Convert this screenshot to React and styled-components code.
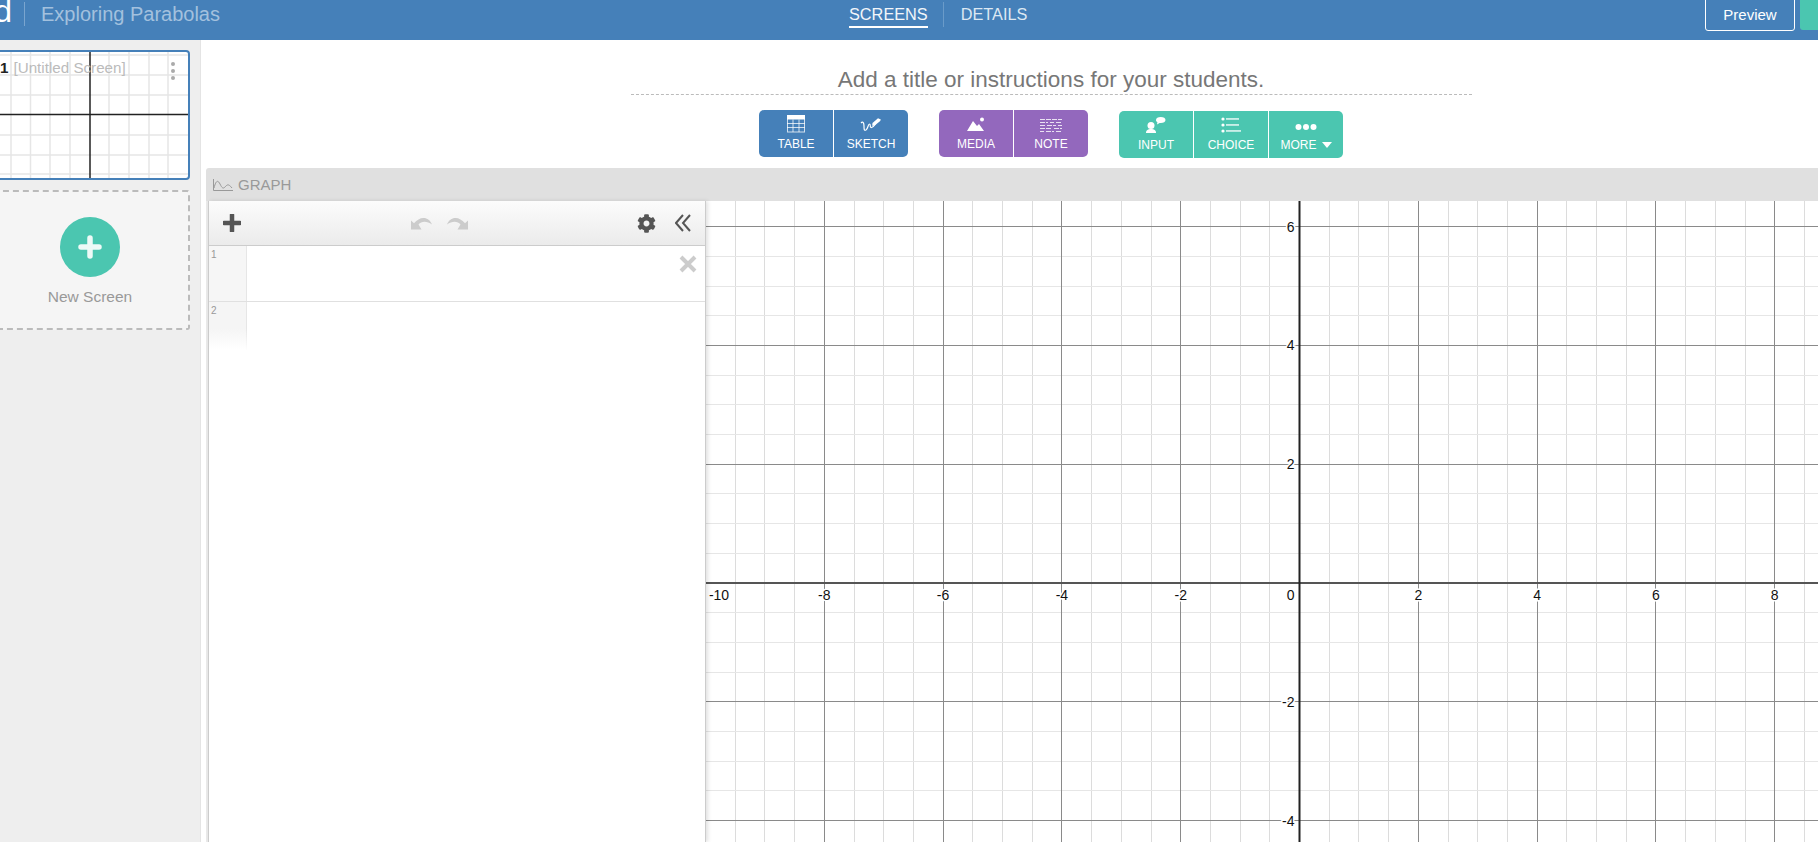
import React from "react"
import styled, { createGlobalStyle } from "styled-components"
import { FaCog } from "react-icons/fa"

const GlobalStyle = createGlobalStyle`
  html, body {
    margin: 0;
    height: 842px;
    overflow: hidden;
    background: #fff;
    font-family: "Liberation Sans", Arial, sans-serif;
  }
`

const Page = styled.div`
  width: 1818px;
  height: 842px;
  overflow: hidden;
  display: flex;
  flex-direction: column;
`

const Header = styled.header`
  height: 40px;
  flex: none;
  background: #4580b9;
  display: flex;
  align-items: flex-start;
  color: #fff;
`

const Brand = styled.div`
  width: 849px;
  flex: none;
  display: flex;
  align-items: flex-start;
`

const Logo = styled.div`
  width: 12px;
  height: 26px;
  overflow: hidden;
  display: flex;
  justify-content: flex-end;
  font-size: 32px;
  line-height: 22px;
`

const BrandDivider = styled.div`
  width: 1px;
  height: 24px;
  margin: 2px 16px 0 12px;
  background: #7aa5cf;
`

const ActivityName = styled.div`
  font-size: 20px;
  line-height: 28px;
  color: #a3c1de;
`

const Tabs = styled.nav`
  display: flex;
  align-items: flex-start;
`

const Tab = styled.div`
  font-size: 16.3px;
  line-height: 29px;
  height: 26px;
  color: ${p => (p.$active ? "#f2f6fa" : "#dce8f3")};
  border-bottom: ${p => (p.$active ? "2px solid #fff" : "0")};
`

const TabDivider = styled.div`
  width: 1px;
  height: 25px;
  margin: 2px 17px 0 15px;
  background: #6a9bc9;
`

const HeaderActions = styled.div`
  margin-left: auto;
  display: flex;
  gap: 5px;
`

const PreviewButton = styled.div`
  width: 88px;
  height: 30px;
  margin-top: -1px;
  border: 1px solid #fff;
  border-radius: 0 0 3px 3px;
  text-align: center;
  font-size: 15px;
  line-height: 30px;
`

const PublishButton = styled.div`
  width: 18px;
  height: 30px;
  background: #4bc6b0;
  border-radius: 0 0 0 3px;
`

const Body = styled.div`
  flex: 1;
  display: flex;
  min-height: 0;
`

const Sidebar = styled.aside`
  width: 200px;
  flex: none;
  background: #eee;
  border-right: 1px solid #e4e4e4;
  padding-top: 10px;
  display: flex;
  flex-direction: column;
  gap: 10px;
  overflow: hidden;
`

const ScreenCard = styled.div`
  position: relative;
  width: 200px;
  height: 130px;
  margin-left: -10px;
  box-sizing: border-box;
  background: #fff;
  border: 2px solid #4580b9;
  border-radius: 4px;
  overflow: hidden;
`

const ThumbGraph = styled.svg`
  display: block;
`

const ScreenTitle = styled.div`
  position: absolute;
  left: 8px;
  top: 7px;
  display: flex;
  gap: 5px;
  font-size: 15.2px;
  line-height: 18px;
  color: #bbb;
`

const ScreenNumber = styled.span`
  color: #222;
  font-weight: 700;
`

const ScreenMenu = styled.svg`
  position: absolute;
  right: 12px;
  top: 9px;
`

const NewScreen = styled.div`
  width: 200px;
  height: 140px;
  margin-left: -10px;
  box-sizing: border-box;
  background: #f5f5f5;
  border: 2px dashed #bbb;
  border-radius: 3px;
  display: flex;
  flex-direction: column;
  align-items: center;
  padding-top: 25px;
  color: #999;
  font-size: 15.5px;
`

const AddCircle = styled.div`
  width: 60px;
  height: 60px;
  border-radius: 50%;
  background: #4bc6b0;
  display: flex;
  align-items: center;
  justify-content: center;
  margin-bottom: 11px;
`

const Main = styled.main`
  width: 1700px;
  flex: none;
  display: flex;
  flex-direction: column;
`

const TitleInput = styled.div`
  width: 841px;
  height: 55px;
  flex: none;
  margin: 0 auto;
  box-sizing: border-box;
  padding-top: 27px;
  border-bottom: 1px dashed #bbb;
  text-align: center;
  font-size: 22.5px;
  line-height: 26px;
  color: #777;
`

const Toolbar = styled.div`
  display: flex;
  justify-content: center;
  gap: 31px;
  margin-top: 15px;
  height: 48px;
  flex: none;
`

const ButtonGroup = styled.div`
  display: flex;
  gap: 1px;
`

const ToolButton = styled.div`
  width: 74px;
  height: 47px;
  margin-top: ${p => (p.$color === "#4bc6b0" ? "1px" : "0")};
  background: ${p => p.$color};
  color: #fff;
  font-size: 12px;
  display: flex;
  flex-direction: column;
  align-items: center;
  box-sizing: border-box;
  padding-top: 5px;
  &:first-child {
    border-radius: 5px 0 0 5px;
  }
  &:last-child {
    border-radius: 0 5px 5px 0;
  }
`

const ToolIcon = styled.svg`
  display: block;
  margin-bottom: 4px;
`

const MoreLabel = styled.span`
  display: flex;
  align-items: center;
  gap: 5px;
`

const Caret = styled.span`
  width: 0;
  height: 0;
  border-left: 5.5px solid transparent;
  border-right: 5.5px solid transparent;
  border-top: 6px solid #fff;
`

const GraphBar = styled.div`
  height: 33px;
  flex: none;
  margin: 10px 0 0 5px;
  background: #e0e0e0;
  border-radius: 3px 0 0 0;
  display: flex;
  align-items: center;
  gap: 5px;
  padding-left: 7px;
  color: #999;
  font-size: 15px;
`

const GraphPanel = styled.div`
  flex: 1;
  min-height: 0;
  margin-left: 5px;
  border-left: 2px solid #eaeaea;
  display: flex;
`

const ExpressionList = styled.div`
  position: relative;
  z-index: 1;
  width: 498px;
  flex: none;
  box-sizing: border-box;
  background: #fff;
  border-left: 1px solid #ccc;
  border-right: 1px solid #ccc;
  box-shadow: 2px 0 4px rgba(0, 0, 0, 0.12);
`

const ListHeader = styled.div`
  height: 45px;
  box-sizing: border-box;
  border-bottom: 1px solid #ccc;
  background: linear-gradient(#fcfcfc, #ebebeb);
  display: flex;
  align-items: center;
  padding: 0 14px;
`

const HistoryButtons = styled.div`
  display: flex;
  gap: 15px;
  margin-left: 170px;
`

const RedoIcon = styled.svg`
  transform: scaleX(-1);
`

const ListActions = styled.div`
  margin-left: auto;
  display: flex;
  align-items: center;
  gap: 19px;
  color: #555;
  font-size: 19px;
`

const ExpressionRow = styled.div`
  position: relative;
  height: 55px;
  border-bottom: ${p => (p.$last ? "0" : "1px solid #e0e0e0")};
`

const Gutter = styled.div`
  width: 38px;
  height: ${p => (p.$fade ? "48px" : "100%")};
  box-sizing: border-box;
  padding: 3px 0 0 2px;
  font-size: 10px;
  line-height: 12px;
  color: #999;
  border-right: 1px solid #e6e6e6;
  background: ${p => (p.$fade ? "linear-gradient(#f5f5f5 55%, #fff)" : "#f6f6f6")};
  ${p => p.$fade && "border-image: linear-gradient(#e6e6e6 55%, #fff) 1;"}
`

const RemoveIcon = styled.svg`
  position: absolute;
  right: 7px;
  top: 8px;
`

const GraphPaper = styled.div`
  flex: 1;
  min-width: 0;
  overflow: hidden;
`

const PaperSvg = styled.svg`
  display: block;
  font-family: "Liberation Sans", Arial, sans-serif;
  font-size: 14px;
  fill: #111;
`

const UNIT = 29.7
const OX = 593.5
const OY = 382
const W = 1112
const H = 641

// index runs over half units, every 4th line is a major one
function linePositions(origin, size) {
  const out = []
  for (let i = -40; i <= 40; i++) {
    const pos = origin + i * UNIT
    if (pos >= 0 && pos <= size) out.push({ i, pos: Math.floor(pos) + 0.5 })
  }
  return out
}

function Paper() {
  const xs = linePositions(OX, W)
  const ys = linePositions(OY, H)
  const xLabels = [-8, -6, -4, -2, 2, 4, 6, 8]
  const yLabels = [6, 4, 2, -2, -4]
  return (
    <PaperSvg width={W} height={H}>
      {xs.filter(l => l.i % 4 !== 0).map(l => (
        <line key={l.i} x1={l.pos} x2={l.pos} y1="0" y2={H} stroke="#dcdcdc" />
      ))}
      {ys.filter(l => l.i % 4 !== 0).map(l => (
        <line key={l.i} y1={l.pos} y2={l.pos} x1="0" x2={W} stroke="#e6e6e6" />
      ))}
      {xs.filter(l => l.i % 4 === 0 && l.i !== 0).map(l => (
        <line key={l.i} x1={l.pos} x2={l.pos} y1="0" y2={H} stroke="#8a8a8a" />
      ))}
      {ys.filter(l => l.i % 4 === 0 && l.i !== 0).map(l => (
        <line key={l.i} y1={l.pos} y2={l.pos} x1="0" x2={W} stroke="#8a8a8a" />
      ))}
      <line x1="0" x2={W} y1={OY} y2={OY} stroke="#555" strokeWidth="2" />
      <line x1={OX} x2={OX} y1="0" y2={H} stroke="#222" strokeWidth="2" />
      <Label x={13} y={399} anchor="middle">-10</Label>
      {xLabels.map(n => (
        <Label key={n} x={OX + n * UNIT * 2} y={399} anchor="middle">{n}</Label>
      ))}
      <Label x={OX - 5} y={399} anchor="end">0</Label>
      {yLabels.map(n => (
        <Label key={n} x={OX - 5} y={OY - n * UNIT * 2 + 5} anchor="end">{n}</Label>
      ))}
    </PaperSvg>
  )
}

function Label({ x, y, anchor, children }) {
  return (
    <text
      x={x}
      y={y}
      textAnchor={anchor}
      stroke="#fff"
      strokeWidth="3"
      paintOrder="stroke"
    >
      {children}
    </text>
  )
}

function ThumbnailGraph() {
  const vs = [19, 38.5, 58, 78, 117, 137, 157, 176]
  const hs = [3, 23, 43, 83, 103, 122]
  return (
    <ThumbGraph width="196" height="126">
      {vs.map(x => (
        <line key={x} x1={x} x2={x} y1="0" y2="126" stroke="#e6e6e6" strokeWidth="1.5" />
      ))}
      {hs.map(y => (
        <line key={y} y1={y} y2={y} x1="0" x2="196" stroke="#e6e6e6" strokeWidth="1.5" />
      ))}
      <line x1="0" x2="196" y1="62.5" y2="62.5" stroke="#222" strokeWidth="1.5" />
      <line x1="98" x2="98" y1="0" y2="126" stroke="#222" strokeWidth="1.5" />
    </ThumbGraph>
  )
}

const TableIcon = () => (
  <ToolIcon width="18" height="18" viewBox="0 0 18 18" fill="none" stroke="#fff" strokeOpacity=".75">
    <rect x="0.5" y="0.5" width="17" height="16.5" />
    <rect x="0" y="0" width="18" height="4.5" fill="#fff" stroke="none" />
    <path d="M0 8.5h18M0 12.5h18M6 4.5v12.5M12 4.5v12.5" />
  </ToolIcon>
)

const SketchIcon = () => (
  <ToolIcon width="22" height="18" viewBox="0 0 22 18" fill="none">
    <path d="M1 8c2-2 3 0 3 3s0 5 2 4 2-6 3.500-6 0 4 2 3.500 3-2 4-3.500" stroke="#fff" strokeWidth="1.200" />
    <path d="M12.500 8L18 3.200l2.800 1.300-.6 1.500-5.500 4.500-2.500.3z" fill="#fff" />
  </ToolIcon>
)

const MediaIcon = () => (
  <ToolIcon width="18" height="18" viewBox="0 0 18 18" fill="#fff">
    <path d="M0 16L6 6l4 5 2-2 5 7z" />
    <circle cx="15" cy="4.500" r="2" />
  </ToolIcon>
)

const NoteIcon = () => (
  <ToolIcon width="24" height="18" viewBox="0 0 24 18" stroke="#fff" strokeOpacity=".8" fill="none">
    <path d="M1 4.500h22M1 7.500h8m2 0h4m2 0h6M1 10.500h5m2 0h9m2 0h4M1 13.500h12m2 0h8M1 16.500h4m2 0h8m2 0h6" strokeDasharray="5 1" />
  </ToolIcon>
)

const InputIcon = () => (
  <ToolIcon width="22" height="18" viewBox="0 0 22 18" fill="#fff">
    <circle cx="6" cy="9.500" r="3.500" />
    <path d="M1 17c0-3 2-4 5-4s5 1 5 4z" />
    <path d="M11 4c0-1.800 2-3 4.800-3s4.700 1.200 4.700 3-2 3-4.700 3c-.4 0-.8 0-1.200-.1L12 8.500l.4-2.300C11.500 5.700 11 5 11 4z" />
  </ToolIcon>
)

const ChoiceIcon = () => (
  <ToolIcon width="20" height="18" viewBox="0 0 20 18" fill="#fff">
    <circle cx="2" cy="3" r="1.600" />
    <circle cx="2" cy="9" r="1.600" />
    <circle cx="2" cy="15" r="1.600" />
    <rect x="5" y="2.300" width="13" height="1.300" />
    <rect x="5" y="8.300" width="13" height="1.300" />
    <rect x="5" y="14.300" width="15" height="1.300" />
  </ToolIcon>
)

const MoreIcon = () => (
  <ToolIcon width="22" height="18" viewBox="0 0 22 18" fill="#fff">
    <circle cx="3.500" cy="11" r="3" />
    <circle cx="11" cy="11" r="3" />
    <circle cx="18.500" cy="11" r="3" />
  </ToolIcon>
)

const historyArrow = "M0 12.500V3.500l3 2.800C6 3 9 1 12.500 1c3.800 0 6.800 2.300 8.500 6.500-2.600-2-5-2.800-7.500-2.800-2.500 0-4.500 1-6 2.700l3 5.100z"

const App = () => (
  <Page>
    <GlobalStyle />
    <Header>
      <Brand>
        <Logo>d</Logo>
        <BrandDivider />
        <ActivityName>Exploring Parabolas</ActivityName>
      </Brand>
      <Tabs>
        <Tab $active>SCREENS</Tab>
        <TabDivider />
        <Tab>DETAILS</Tab>
      </Tabs>
      <HeaderActions>
        <PreviewButton>Preview</PreviewButton>
        <PublishButton />
      </HeaderActions>
    </Header>
    <Body>
      <Sidebar>
        <ScreenCard>
          <ThumbnailGraph />
          <ScreenTitle>
            <ScreenNumber>1</ScreenNumber>
            <span>[Untitled Screen]</span>
          </ScreenTitle>
          <ScreenMenu width="6" height="20" viewBox="0 0 6 20" fill="#aaa">
            <circle cx="3" cy="3" r="2" />
            <circle cx="3" cy="10" r="2" />
            <circle cx="3" cy="17" r="2" />
          </ScreenMenu>
        </ScreenCard>
        <NewScreen>
          <AddCircle>
            <svg width="24" height="24" viewBox="0 0 24 24">
              <path d="M12 3v18M3 12h18" stroke="#eefaf7" strokeWidth="5.500" strokeLinecap="round" />
            </svg>
          </AddCircle>
          New Screen
        </NewScreen>
      </Sidebar>
      <Main>
        <TitleInput>Add a title or instructions for your students.</TitleInput>
        <Toolbar>
          <ButtonGroup>
            <ToolButton $color="#4580b9"><TableIcon />TABLE</ToolButton>
            <ToolButton $color="#4580b9"><SketchIcon />SKETCH</ToolButton>
          </ButtonGroup>
          <ButtonGroup>
            <ToolButton $color="#9368bd"><MediaIcon />MEDIA</ToolButton>
            <ToolButton $color="#9368bd"><NoteIcon />NOTE</ToolButton>
          </ButtonGroup>
          <ButtonGroup>
            <ToolButton $color="#4bc6b0"><InputIcon />INPUT</ToolButton>
            <ToolButton $color="#4bc6b0"><ChoiceIcon />CHOICE</ToolButton>
            <ToolButton $color="#4bc6b0">
              <MoreIcon />
              <MoreLabel>MORE<Caret /></MoreLabel>
            </ToolButton>
          </ButtonGroup>
        </Toolbar>
        <GraphBar>
          <svg width="20" height="12" viewBox="0 0 20 12" fill="none" stroke="#999">
            <path d="M.5 0v11.500H20" />
            <path d="M1 9C3 1 5 1 7 5s3 5 5 3 3-4 7 1" />
          </svg>
          GRAPH
        </GraphBar>
        <GraphPanel>
          <ExpressionList>
            <ListHeader>
              <svg width="18" height="18" viewBox="0 0 18 18">
                <path d="M9 1v16M1 9h16" stroke="#555" strokeWidth="4.500" strokeLinecap="round" />
              </svg>
              <HistoryButtons>
                <svg width="21" height="13" viewBox="0 0 21 13" fill="#ccc">
                  <path d={historyArrow} />
                </svg>
                <RedoIcon width="21" height="13" viewBox="0 0 21 13" fill="#ccc">
                  <path d={historyArrow} />
                </RedoIcon>
              </HistoryButtons>
              <ListActions>
                <FaCog />
                <svg width="16" height="18" viewBox="0 0 16 18" fill="none" stroke="#555" strokeWidth="2">
                  <path d="M8 1L1 9l7 8M15 1L8 9l7 8" />
                </svg>
              </ListActions>
            </ListHeader>
            <ExpressionRow>
              <Gutter>1</Gutter>
              <RemoveIcon width="20" height="20" viewBox="0 0 20 20">
                <path d="M3 3l14 14M17 3L3 17" stroke="#ccc" strokeWidth="4" />
              </RemoveIcon>
            </ExpressionRow>
            <ExpressionRow $last>
              <Gutter $fade>2</Gutter>
            </ExpressionRow>
          </ExpressionList>
          <GraphPaper>
            <Paper />
          </GraphPaper>
        </GraphPanel>
      </Main>
    </Body>
  </Page>
)

export default App
